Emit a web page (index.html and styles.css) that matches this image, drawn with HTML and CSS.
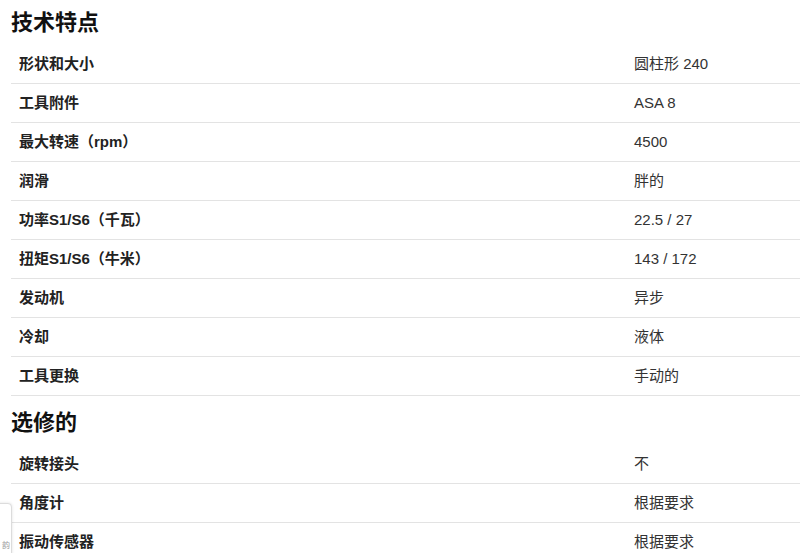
FILE: index.html
```html
<!DOCTYPE html>
<html lang="zh">
<head>
<meta charset="utf-8">
<title>技术特点</title>
<link rel="stylesheet" href="styles.css">
</head>
<body>
<div class="page">
  <h2 class="title">技术特点</h2>
  <table class="specs">
    <colgroup><col class="c-label"><col class="c-value"></colgroup>
    <tr><th>形状和大小</th><td>圆柱形 240</td></tr>
    <tr><th>工具附件</th><td>ASA 8</td></tr>
    <tr><th>最大转速（rpm）</th><td>4500</td></tr>
    <tr><th>润滑</th><td>胖的</td></tr>
    <tr><th>功率S1/S6（千瓦）</th><td>22.5 / 27</td></tr>
    <tr><th>扭矩S1/S6（牛米）</th><td>143 / 172</td></tr>
    <tr><th>发动机</th><td>异步</td></tr>
    <tr><th>冷却</th><td>液体</td></tr>
    <tr><th>工具更换</th><td>手动的</td></tr>
  </table>
  <h2 class="title">选修的</h2>
  <table class="specs">
    <colgroup><col class="c-label"><col class="c-value"></colgroup>
    <tr><th>旋转接头</th><td>不</td></tr>
    <tr><th>角度计</th><td>根据要求</td></tr>
    <tr><th>振动传感器</th><td>根据要求</td></tr>
  </table>
</div>
<div class="side-widget"><span class="side-char">韵</span></div>
</body>
</html>
```
FILE: styles.css
```css
html, body {
  margin: 0;
  padding: 0;
  background: #fff;
  overflow: hidden;
}
body {
  font-family: "Liberation Sans", "Noto Sans CJK SC", sans-serif;
  color: #333;
  height: 553px;
  position: relative;
}
.page {
  padding-left: 11px;
  padding-top: 1px;
}
.title {
  font-size: 22px;
  line-height: 24px;
  font-weight: 700;
  color: #111;
  margin: 10px 0 10px;
}
.specs {
  width: 789px;
  border-collapse: collapse;
  margin-bottom: 15px;
  font-size: 15px;
  line-height: 22px;
}
.c-label { width: 615px; }
.specs th,
.specs td {
  padding: 8px;
  text-align: left;
  vertical-align: middle;
  border-bottom: 1px solid #e3e3e3;
}
.specs th {
  font-weight: 700;
  color: #222;
}
.specs td {
  color: #333;
}
.side-widget {
  position: absolute;
  left: -10px;
  top: 503px;
  width: 20px;
  height: 70px;
  border: 1px solid #dcdcdc;
  border-radius: 4px;
  background: #fff;
  box-shadow: 0 0 3px rgba(0,0,0,0.12);
  overflow: hidden;
}
.side-char {
  position: absolute;
  left: 11px;
  top: 37px;
  font-size: 8px;
  line-height: 9px;
  color: #999;
}
```
